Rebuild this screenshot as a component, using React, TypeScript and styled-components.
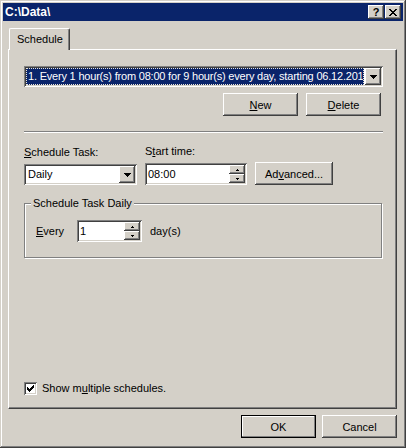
import React from 'react'
import styled, { createGlobalStyle, css } from 'styled-components'

const face = '#d4d0c8'
const light = '#ffffff'
const shadow = '#808080'
const dark = '#404040'
const navy = '#0a246a'

const GlobalStyle = createGlobalStyle`
  * {
    box-sizing: border-box;
  }

  html,
  body {
    margin: 0;
    padding: 0;
    background: ${face};
  }

  body {
    font-family: "Liberation Sans", Arial, sans-serif;
    font-size: 11px;
    color: #000;
  }
`

const raised = css`
  background: ${face};
  box-shadow: inset -1px -1px 0 ${dark}, inset 1px 1px 0 ${light}, inset -2px -2px 0 ${shadow};
`

const sunken = css`
  background: ${light};
  box-shadow: inset 1px 1px 0 ${shadow}, inset -1px -1px 0 ${light}, inset 2px 2px 0 ${dark},
    inset -2px -2px 0 ${face};
`

const Window = styled.div`
  display: flex;
  flex-direction: column;
  width: 406px;
  height: 448px;
  padding: 3px;
  background: ${face};
  box-shadow: inset -1px -1px 0 ${dark}, inset 1px 1px 0 ${face}, inset -2px -2px 0 ${shadow},
    inset 2px 2px 0 ${light};
`

const TitleBar = styled.div`
  display: flex;
  align-items: center;
  gap: 1px;
  height: 18px;
  padding: 0 2px;
  background: ${navy};
  color: #fff;
`

const Title = styled.span`
  flex: 1;
  font-size: 12px;
  font-weight: bold;
  white-space: nowrap;
`

const CaptionButton = styled.span`
  ${raised}
  display: flex;
  align-items: center;
  justify-content: center;
  width: 16px;
  height: 14px;
  color: #000;
  font-weight: bold;
  font-size: 11px;
  line-height: 1;
`

const Body = styled.div`
  flex: 1;
  display: flex;
  flex-direction: column;
  padding: 7px 6px 7px 5px;
`

const TabStrip = styled.div`
  position: relative;
  z-index: 1;
  display: flex;
  margin-bottom: -1px;
  padding-left: 1px;
`

const Tab = styled.div`
  width: 61px;
  height: 22px;
  padding: 4px 0 0 7px;
  background: ${face};
  border: 1px solid;
  border-color: ${light} ${dark} transparent ${light};
  border-bottom: none;
  border-radius: 2px 2px 0 0;
  box-shadow: inset -1px 0 0 ${shadow};
  line-height: 13px;
`

const Panel = styled.div`
  flex: 1;
  display: flex;
  flex-direction: column;
  padding: 16px 13px 13px 15px;
  border: 1px solid;
  border-color: ${light} ${dark} ${dark} ${light};
  box-shadow: inset -1px -1px 0 ${shadow};
`

const ComboBox = styled.div<{ $width: number }>`
  ${sunken}
  display: flex;
  width: ${({ $width }) => $width}px;
  height: 21px;
  padding: 2px;
`

const ComboValue = styled.div<{ $selected?: boolean }>`
  flex: 1;
  min-width: 0;
  overflow: hidden;
  white-space: nowrap;
  padding: 1px 2px;
  line-height: 15px;

  ${({ $selected }) =>
    $selected &&
    css`
      padding: 0 1px;
      margin-right: 1px;
      background: ${navy};
      color: #fff;
      border: 1px dotted #e8e4d8;
      letter-spacing: -0.2px;
    `}
`

const DropButton = styled.div`
  ${raised}
  display: flex;
  align-items: center;
  justify-content: center;
  width: 16px;
  height: 17px;
`

const ButtonRow = styled.div`
  display: flex;
  justify-content: flex-end;
  gap: 8px;
  margin-top: 6px;
  padding-right: 2px;
`

const PushButton = styled.button<{ $width?: number; $default?: boolean }>`
  ${raised}
  width: ${({ $width }) => $width ?? 75}px;
  height: 23px;
  padding: 0;
  border: none;
  font: inherit;
  color: #000;

  ${({ $default }) =>
    $default &&
    css`
      box-shadow: inset 0 0 0 1px #000, inset -2px -2px 0 ${shadow}, inset 2px 2px 0 ${light};
    `}
`

const Separator = styled.div`
  height: 2px;
  margin-top: 15px;
  border-top: 1px solid ${shadow};
  border-bottom: 1px solid ${light};
`

const FieldRow = styled.div`
  display: flex;
  align-items: flex-end;
  gap: 8px;
  margin-top: 12px;
`

const Field = styled.div<{ $width: number }>`
  display: flex;
  flex-direction: column;
  gap: 5px;
  width: ${({ $width }) => $width}px;
`

const Label = styled.span`
  display: block;
  line-height: 13px;
  white-space: nowrap;
`

const SpinBox = styled.div<{ $width: number }>`
  ${sunken}
  display: flex;
  width: ${({ $width }) => $width}px;
  height: 22px;
  padding: 2px;
`

const SpinText = styled.div`
  flex: 1;
  padding: 0 1px;
  line-height: 18px;
`

const SpinButtons = styled.div`
  display: flex;
  flex-direction: column;
  width: 16px;
`

const SpinButton = styled.div`
  ${raised}
  flex: 1;
  display: flex;
  align-items: center;
  justify-content: center;
`

const GroupBox = styled.div`
  display: flex;
  flex-direction: column;
  width: 358px;
  margin-top: 18px;
  padding-bottom: 15px;
  border: 1px solid ${shadow};
  box-shadow: 1px 1px 0 ${light}, inset 1px 1px 0 ${light};
`

const GroupCaption = styled.span`
  align-self: flex-start;
  margin: -7px 0 0 6px;
  padding: 0 2px;
  background: ${face};
  line-height: 13px;
`

const EveryRow = styled.div`
  display: flex;
  align-items: center;
  margin-top: 10px;
  padding-left: 11px;
`

const EveryLabel = styled(Label)`
  width: 41px;
`

const Unit = styled(Label)`
  margin-left: 8px;
`

const CheckRow = styled.div`
  display: flex;
  align-items: center;
  gap: 5px;
  margin-top: auto;
  line-height: 13px;
`

const CheckBox = styled.span`
  ${sunken}
  display: flex;
  align-items: center;
  justify-content: center;
  width: 13px;
  height: 13px;
`

const Footer = styled.div`
  display: flex;
  justify-content: flex-end;
  gap: 6px;
  margin-top: 6px;
`

const Pixels = ({ w, h, cells }: { w: number; h: number; cells: number[][] }) => (
  <svg width={w} height={h} viewBox={`0 0 ${w} ${h}`} shapeRendering="crispEdges" fill="#000">
    {cells.map(([x, y, cw, ch], i) => (
      <rect key={i} x={x} y={y} width={cw} height={ch} />
    ))}
  </svg>
)

const CloseGlyph = () => (
  <Pixels
    w={8}
    h={7}
    cells={[
      [0, 0, 2, 1],
      [6, 0, 2, 1],
      [1, 1, 2, 1],
      [5, 1, 2, 1],
      [2, 2, 4, 1],
      [3, 3, 2, 1],
      [2, 4, 4, 1],
      [1, 5, 2, 1],
      [5, 5, 2, 1],
      [0, 6, 2, 1],
      [6, 6, 2, 1],
    ]}
  />
)

const DropArrow = () => (
  <Pixels
    w={7}
    h={4}
    cells={[
      [0, 0, 7, 1],
      [1, 1, 5, 1],
      [2, 2, 3, 1],
      [3, 3, 1, 1],
    ]}
  />
)

const UpArrow = () => (
  <Pixels
    w={3}
    h={2}
    cells={[
      [1, 0, 1, 1],
      [0, 1, 3, 1],
    ]}
  />
)

const DownArrow = () => (
  <Pixels
    w={3}
    h={2}
    cells={[
      [0, 0, 3, 1],
      [1, 1, 1, 1],
    ]}
  />
)

const CheckMark = () => (
  <Pixels
    w={7}
    h={7}
    cells={[
      [0, 2, 1, 3],
      [1, 3, 1, 3],
      [2, 4, 1, 3],
      [3, 3, 1, 3],
      [4, 2, 1, 3],
      [5, 1, 1, 3],
      [6, 0, 1, 3],
    ]}
  />
)

const Spinner = ({ value, width }: { value: string; width: number }) => (
  <SpinBox $width={width}>
    <SpinText>{value}</SpinText>
    <SpinButtons>
      <SpinButton>
        <UpArrow />
      </SpinButton>
      <SpinButton>
        <DownArrow />
      </SpinButton>
    </SpinButtons>
  </SpinBox>
)

export default function App() {
  return (
    <>
      <GlobalStyle />
      <Window>
        <TitleBar>
          <Title>{'C:\\Data\\'}</Title>
          <CaptionButton>?</CaptionButton>
          <CaptionButton>
            <CloseGlyph />
          </CaptionButton>
        </TitleBar>
        <Body>
          <TabStrip>
            <Tab>Schedule</Tab>
          </TabStrip>
          <Panel>
            <ComboBox $width={359}>
              <ComboValue $selected>
                1. Every 1 hour(s) from 08:00 for 9 hour(s) every day, starting 06.12.201
              </ComboValue>
              <DropButton>
                <DropArrow />
              </DropButton>
            </ComboBox>
            <ButtonRow>
              <PushButton>
                <u>N</u>ew
              </PushButton>
              <PushButton>
                <u>D</u>elete
              </PushButton>
            </ButtonRow>
            <Separator />
            <FieldRow>
              <Field $width={113}>
                <Label>
                  <u>S</u>chedule Task:
                </Label>
                <ComboBox $width={113}>
                  <ComboValue>Daily</ComboValue>
                  <DropButton>
                    <DropArrow />
                  </DropButton>
                </ComboBox>
              </Field>
              <Field $width={102}>
                <Label>
                  S<u>t</u>art time:
                </Label>
                <Spinner value="08:00" width={102} />
              </Field>
              <PushButton $width={78}>
                Ad<u>v</u>anced...
              </PushButton>
            </FieldRow>
            <GroupBox>
              <GroupCaption>Schedule Task Daily</GroupCaption>
              <EveryRow>
                <EveryLabel>
                  <u>E</u>very
                </EveryLabel>
                <Spinner value="1" width={65} />
                <Unit>day(s)</Unit>
              </EveryRow>
            </GroupBox>
            <CheckRow>
              <CheckBox>
                <CheckMark />
              </CheckBox>
              <span>
                Show m<u>u</u>ltiple schedules.
              </span>
            </CheckRow>
          </Panel>
          <Footer>
            <PushButton $default>OK</PushButton>
            <PushButton>Cancel</PushButton>
          </Footer>
        </Body>
      </Window>
    </>
  )
}
